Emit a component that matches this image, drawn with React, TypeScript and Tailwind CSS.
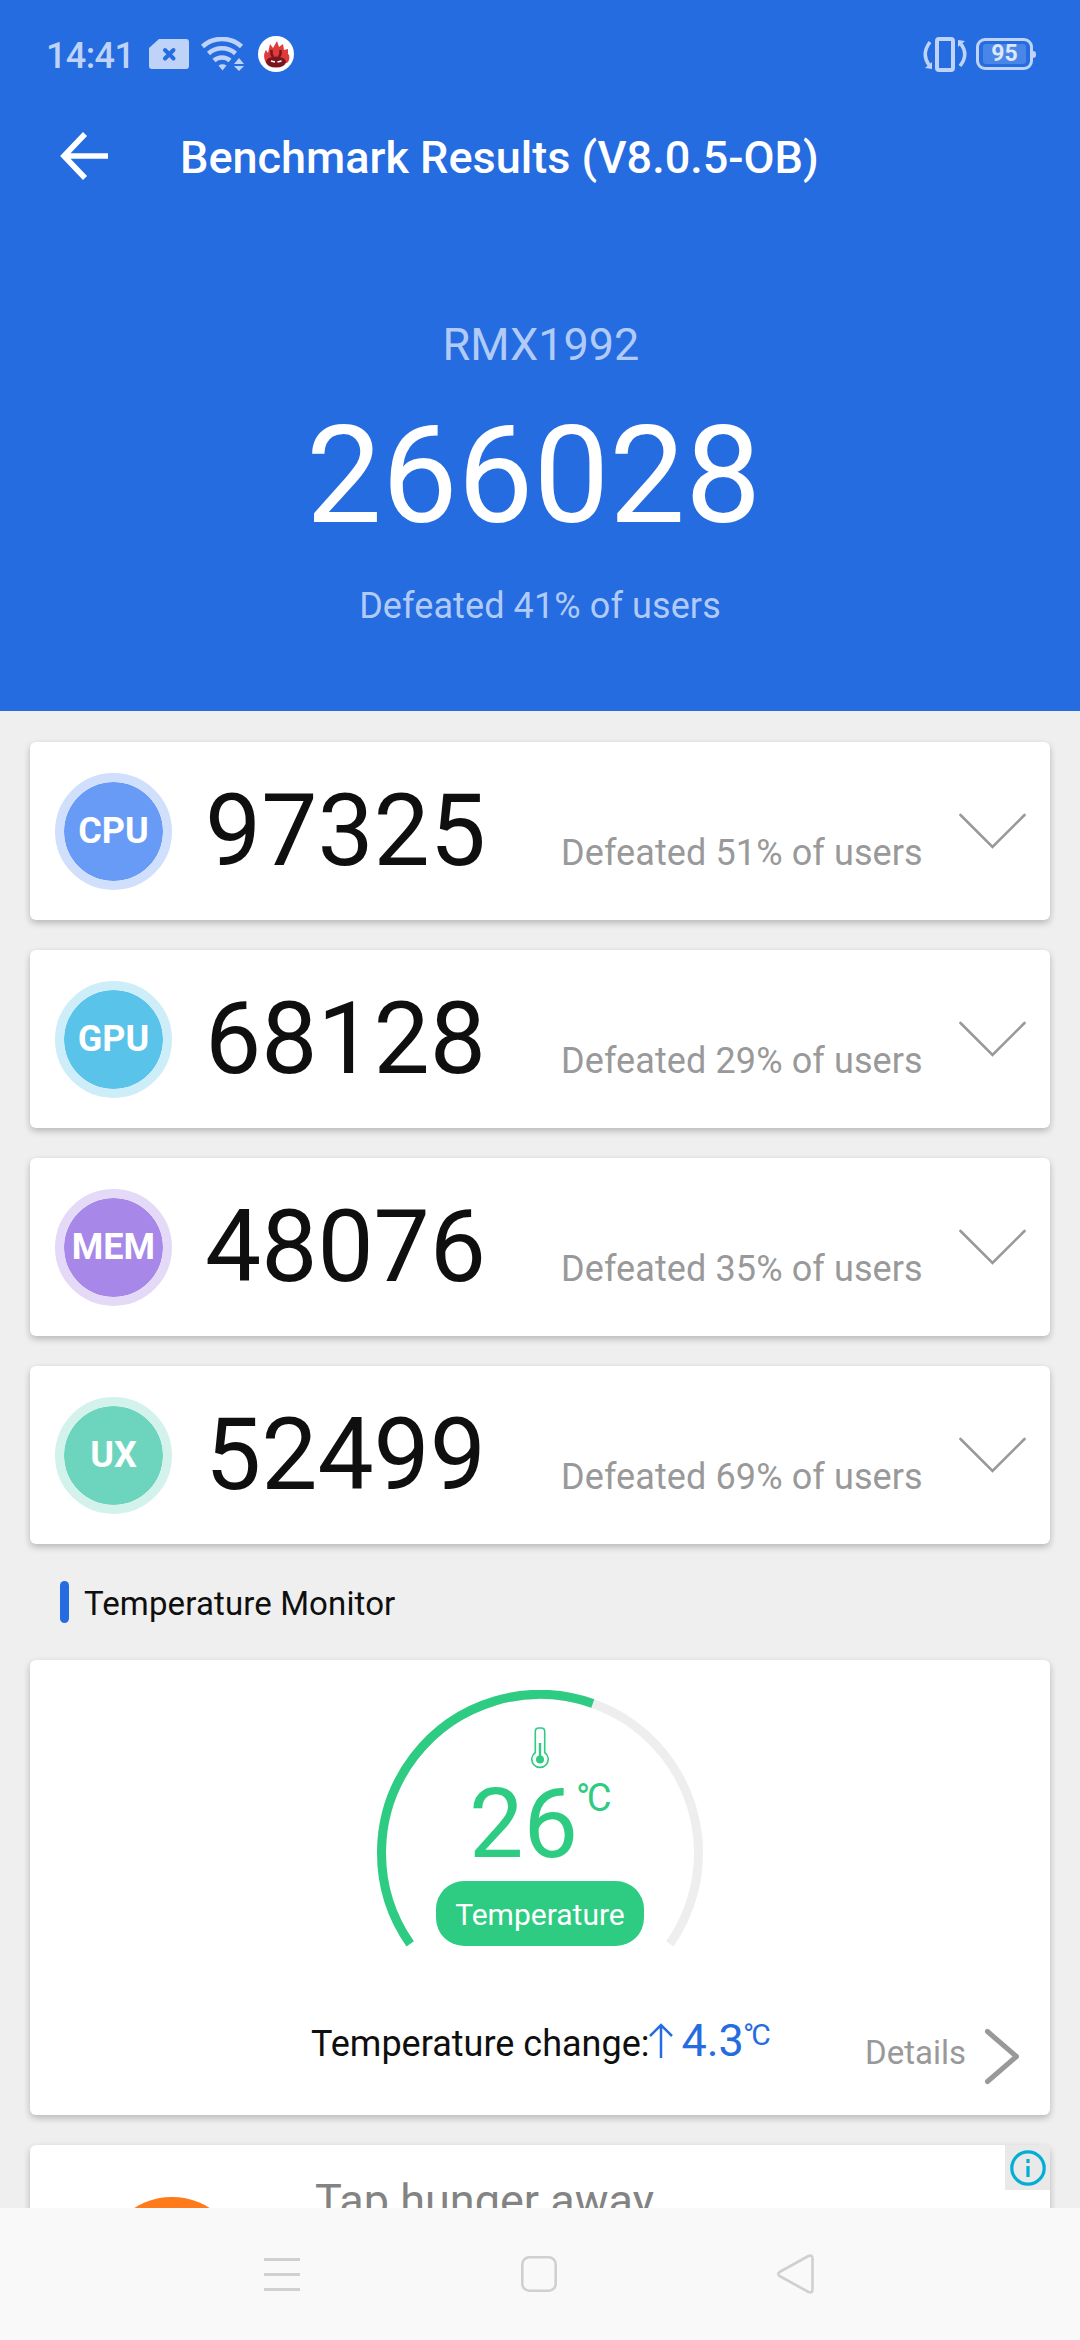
import React from 'react';

interface Score {
    label: string;
    value: string;
    percent: number;
    badge: string;
}

const scores: Score[] = [
    { label: 'CPU', value: '97325', percent: 51, badge: 'bg-[#689bf5] border-[#d0dffb]' },
    { label: 'GPU', value: '68128', percent: 29, badge: 'bg-[#5ac3ea] border-[#cdedf9]' },
    { label: 'MEM', value: '48076', percent: 35, badge: 'bg-[#a788e8] border-[#e4daf8]' },
    { label: 'UX', value: '52499', percent: 69, badge: 'bg-[#6dd5bd] border-[#d2f2eb]' },
];

const App: React.FC = () => {
    return (
        <div className="flex h-[2340px] w-[1080px] flex-col overflow-hidden bg-[#efefef] font-['Roboto',sans-serif] text-[#0f0f0f]">
            <header className="h-[711px] shrink-0 bg-[#256ce1] text-white">
                <StatusBar />

                {/* Title bar */}
                <div className="flex h-24 items-center pl-[60px]">
                    <svg width="48" height="48" viewBox="0 0 48 48" fill="none" stroke="white" strokeWidth="5.6">
                        <path d="M25 2 4 24l21 22M4 24h44" />
                    </svg>
                    <h1 className="mt-[3px] ml-[72px] text-[45px] leading-[52px] font-medium whitespace-nowrap">
                        Benchmark Results (V8.0.5-OB)
                    </h1>
                </div>

                <div className="flex flex-col items-center pt-[115px]">
                    <p className="ml-0.5 text-[45px] leading-[52px] text-[#b1cbf8]">RMX1992</p>
                    <p className="mt-[25px] mr-[13px] text-[135px] leading-[160px]">266028</p>
                    <p className="mt-[29px] text-4xl leading-[42px] tracking-[0.1px] text-[#b1cbf8]">
                        Defeated 41% of users
                    </p>
                </div>
            </header>

            <main className="flex min-h-0 flex-1 flex-col overflow-hidden px-[30px] pt-[31px]">
                <div className="flex shrink-0 flex-col gap-[30px]">
                    {scores.map((score) => (
                        <ScoreCard key={score.label} score={score} />
                    ))}
                </div>

                {/* Section title */}
                <div className="flex h-[116px] shrink-0 items-center pl-[30px]">
                    <span className="h-[42px] w-[9px] rounded-full bg-[#256ce1]" />
                    <h2 className="mt-[3px] ml-[15px] text-[33px] leading-10 tracking-[0.13px]">Temperature Monitor</h2>
                </div>

                <TemperatureCard />
                <AdCard />
            </main>

            <NavBar />
        </div>
    );
};

const StatusBar: React.FC = () => (
    <div className="flex h-[108px] items-center pr-[44px] pl-[46px]">
        <span className="mt-1 w-[103px] text-4xl leading-[42px] font-medium tracking-[-0.6px] text-[#bed3f7]">14:41</span>

        {/* SIM */}
        <svg width="40" height="30" viewBox="0 0 40 30">
            <path d="M10 0h27a3 3 0 0 1 3 3v24a3 3 0 0 1-3 3H3a3 3 0 0 1-3-3V9z" fill="#bed3f7" />
            <path d="m16 11 8.5 8.5m0-8.5-8.5 8.5" stroke="#256ce1" strokeWidth="4" strokeLinecap="round" />
        </svg>

        {/* Wi-Fi */}
        <svg className="ml-3" width="43" height="34" viewBox="0 0 43 34" fill="none" stroke="#bed3f7" strokeWidth="4.6">
            <path d="M1.5 9.5a29 29 0 0 1 39 0" />
            <path d="M7.5 16.5a20 20 0 0 1 27 0" />
            <path d="M13 23.5a12 12 0 0 1 16 0" />
            <path d="M17.5 28.5q4-2.5 8 0l-4 5z" fill="#bed3f7" stroke="none" />
            <path d="m38 21 5 6H33zM33 29h10l-5 5z" fill="#bed3f7" stroke="none" />
        </svg>

        {/* AnTuTu */}
        <svg className="ml-[14px]" width="36" height="36" viewBox="0 0 36 36">
            <circle cx="18" cy="18" r="18" fill="white" />
            <path
                d="M8 27C5 21 6 17 8 14l2 3 2-9 3 4 4-7 2 6 4-3 1 6 4-1v5l1 1c1 4 0 6-2 8z"
                fill="#df3b3b"
            />
            <path d="M13.5 14v4l1.5 3M22.5 14v4l-1.5 3" fill="none" stroke="#7a1520" strokeWidth="2.5" />
            <ellipse cx="18" cy="26" rx="10" ry="5.5" fill="#7a1520" />
            <path d="m13 25 4 1M23.5 25l-4 1" stroke="white" strokeWidth="1.3" />
        </svg>

        {/* Vibrate */}
        <svg className="ml-auto" width="44" height="35" viewBox="0 0 44 35" fill="none" stroke="#bed3f7" strokeWidth="3.5">
            <rect x="14" y="2" width="16" height="31" rx="2" strokeWidth="4" />
            <path d="M7 5Q-2 17 6 28" />
            <path d="m2 31 7-6v7z" fill="#bed3f7" stroke="none" />
            <path d="M37 29q9-11 1-22" />
            <path d="m42 4-7 6V3z" fill="#bed3f7" stroke="none" />
        </svg>

        {/* Battery */}
        <div className="ml-[9px] flex items-center">
            <div className="flex h-8 w-[57px] items-center justify-center rounded-[9px] border-[3px] border-[#bed3f7]">
                <span className="flex h-5 w-[43px] items-center justify-center rounded-[3px] bg-[#4a85e8] text-[23px] font-bold text-[#dbe7fb]">
                    95
                </span>
            </div>
            <span className="h-[7px] w-[3px] rounded-r-full bg-[#bed3f7]" />
        </div>
    </div>
);

const ScoreCard: React.FC<{ score: Score }> = ({ score }) => (
    <section className="flex h-[178px] items-center rounded-md bg-white pr-6 pl-[25px] shadow-[0_3px_7px_rgba(0,0,0,0.24)]">
        <span
            className={`flex size-[117px] items-center justify-center rounded-full border-[9px] bg-clip-padding text-4xl font-bold text-white ${score.badge}`}
        >
            {score.label}
        </span>
        <div className="ml-[33px] flex items-baseline">
            <span className="w-[356px] text-[100px] leading-[120px]">{score.value}</span>
            <span className="text-4xl tracking-[0.1px] text-[#999]">Defeated {score.percent}% of users</span>
        </div>
        <svg className="ml-auto" width="67" height="36" viewBox="0 0 67 36" fill="none" stroke="#999" strokeWidth="2.6" strokeLinecap="round">
            <path d="m1.5 2 32 32 32-32" />
        </svg>
    </section>
);

const TemperatureCard: React.FC = () => (
    <section className="flex h-[455px] shrink-0 flex-col rounded-md bg-white pt-[30px] shadow-[0_3px_7px_rgba(0,0,0,0.24)]">
        <div className="relative flex h-[257px] w-[326px] flex-col items-center self-center pt-[37px] text-[#2ecc82]">
            {/* Gauge: 250 degree track, filled to 26 of 45 */}
            <svg className="absolute inset-0" width="326" height="257" viewBox="0 0 326 257" fill="none" strokeWidth="9">
                <path d="M33.2 253.9A158.5 158.5 0 1 1 292.8 253.9" stroke="#eee" />
                <path d="M33.2 253.9A158.5 158.5 0 0 1 215.8 13.5" stroke="#2ecc82" />
            </svg>

            <svg className="shrink-0" width="18" height="42" viewBox="0 0 18 42" fill="none" stroke="#2ecc82" strokeWidth="1.6">
                <path d="M4.3 25.5V4.5q0-3.5 3.5-3.5h2.4q3.5 0 3.5 3.5v21a8.2 8.2 0 1 1-9.4 0z" />
                <circle cx="9" cy="32.5" r="4" fill="#2ecc82" stroke="none" />
                <path d="M9 16v15" strokeWidth="2.4" />
            </svg>

            <div className="mt-1.5 ml-[92px] flex self-start">
                <span className="w-[107px] text-[97px] leading-[99px]">26</span>
                <span className="mt-1 text-[38px] leading-[38px] tracking-[-3.5px]">°C</span>
            </div>

            <span className="mt-[7px] flex h-[65px] w-52 items-center justify-center rounded-[28px] bg-[#2ecc82] pt-0.5 text-3xl text-white">
                Temperature
            </span>
        </div>

        <div className="mt-[63px] flex pr-[29px] pl-[281px]">
            <div className="mt-px flex items-baseline">
                <span className="text-4xl leading-[60px]">Temperature change:</span>
                <svg width="24" height="35" viewBox="0 0 24 35" className="translate-y-0.5" fill="none" stroke="#256ce1" strokeWidth="2.5">
                    <path d="M12 35V2M1 13 12 2l11 11" />
                </svg>
                <span className="ml-2 text-[45px] leading-[60px] text-[#256ce1]">4.3</span>
                <span className="mt-[9px] -ml-px self-start text-[30px] leading-[30px] tracking-[-2.8px] text-[#256ce1]">
                    °C
                </span>
            </div>
            <div className="mt-[18px] ml-auto flex h-[57px] items-center text-[33px] text-[#999]">
                <span className="-mt-[7px]">Details</span>
                <svg className="ml-[18px]" width="37" height="57" viewBox="0 0 37 57" fill="none" stroke="#999" strokeWidth="5" strokeLinecap="round" strokeLinejoin="round">
                    <path d="m3.5 3.5 29 25-29 25" />
                </svg>
            </div>
        </div>
    </section>
);

const AdCard: React.FC = () => (
    <section className="relative mt-[30px] flex h-[200px] shrink-0 items-start rounded-md bg-white shadow-[0_3px_7px_rgba(0,0,0,0.24)]">
        <span className="mt-[52px] ml-[72px] size-[140px] rounded-full bg-[#ff7a1a]" />
        <p className="mt-[28px] ml-[73px] text-[45px] leading-[56px] text-[#838383]">Tap hunger away</p>
        <span className="absolute top-0 right-0 flex size-[45px] items-center justify-center bg-[#e9e9e9]">
            <svg width="36" height="36" viewBox="0 0 36 36" fill="none" stroke="#00aed6" strokeWidth="3.2">
                <circle cx="18" cy="18" r="16.2" />
                <path d="M18 9v4M18 16v11" />
            </svg>
        </span>
    </section>
);

const NavBar: React.FC = () => (
    <nav className="flex h-[132px] shrink-0 items-center justify-between bg-[#f9f9f9] pr-[266px] pl-[264px]">
        <svg width="36" height="36" viewBox="0 0 36 36" stroke="#d0d0d0" strokeWidth="3">
            <path d="M0 3.5h36M0 18.5h36M0 33.5h36" />
        </svg>
        <svg width="36" height="36" viewBox="0 0 36 36" fill="none" stroke="#d0d0d0" strokeWidth="2.6">
            <rect x="1.3" y="1.3" width="33.4" height="33.4" rx="7" />
        </svg>
        <svg width="37" height="40" viewBox="0 0 37 40" fill="none" stroke="#d0d0d0" strokeWidth="2.6" strokeLinejoin="round">
            <path d="M31.5 2 2.5 18q-2.5 2 0 4l29 16q4 1.5 4-2.5v-31q0-4-4-2.5z" />
        </svg>
    </nav>
);

export default App;
